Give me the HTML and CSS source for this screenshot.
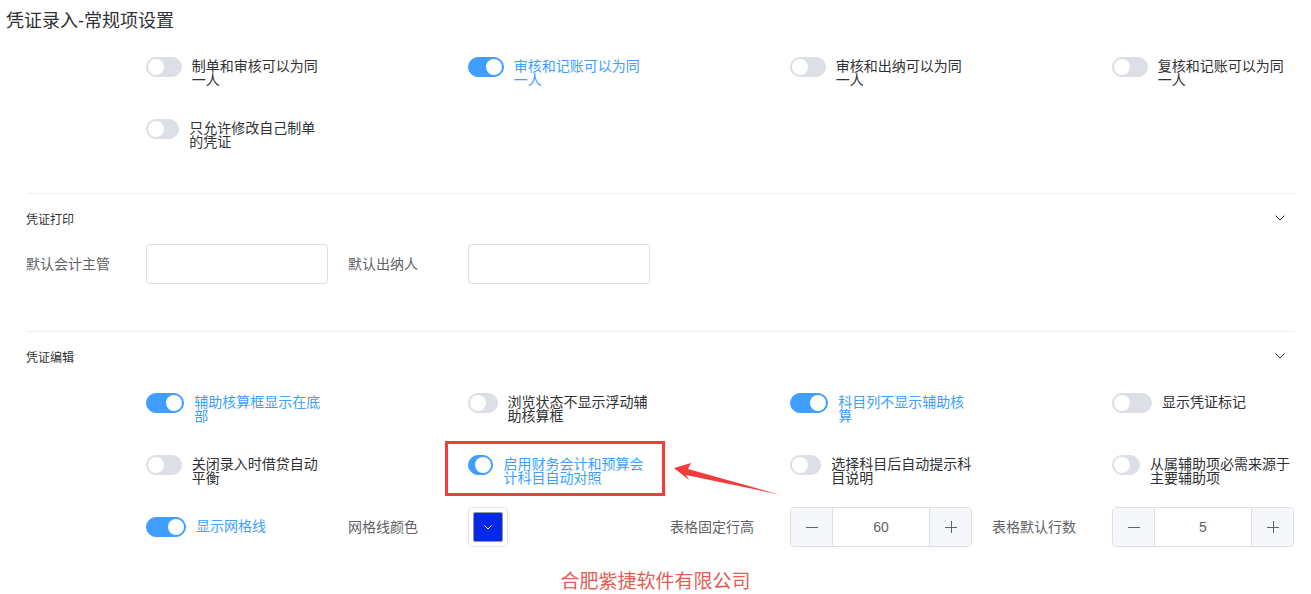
FILE: index.html
```html
<!doctype html>
<html>
  <head>
    <meta charset="utf-8">
    <title>凭证录入-常规项设置</title>
    <link rel="stylesheet" href="styles.css">
  </head>
  <body>
    <div class="page">
      <h1 class="title">凭证录入-常规项设置</h1>
      <div class="form">

        <!-- basic switches -->
        <div class="basic">
          <div class="row">
            <div class="cell"><div class="cell-label"></div><div class="cell-control">
              <label class="switch"><span class="switch-core"></span><span class="switch-label">制单和审核可以为同一人</span></label>
            </div></div>
            <div class="cell"><div class="cell-label"></div><div class="cell-control">
              <label class="switch on"><span class="switch-core"></span><span class="switch-label">审核和记账可以为同一人</span></label>
            </div></div>
            <div class="cell"><div class="cell-label"></div><div class="cell-control">
              <label class="switch"><span class="switch-core"></span><span class="switch-label">审核和出纳可以为同一人</span></label>
            </div></div>
            <div class="cell"><div class="cell-label"></div><div class="cell-control">
              <label class="switch"><span class="switch-core"></span><span class="switch-label">复核和记账可以为同一人</span></label>
            </div></div>
          </div>
          <div class="row">
            <div class="cell"><div class="cell-label"></div><div class="cell-control">
              <label class="switch"><span class="switch-core"></span><span class="switch-label">只允许修改自己制单的凭证</span></label>
            </div></div>
          </div>
        </div>

        <div class="collapse">
          <!-- print -->
          <div class="collapse-item">
            <div class="collapse-header">
              <span>凭证打印</span>
              <svg class="collapse-arrow" width="10" height="6" viewBox="0 0 10 6"><polyline points="0.5,0.5 5,5 9.5,0.5" fill="none" stroke="#303133" stroke-width="1"/></svg>
            </div>
            <div class="collapse-content">
              <div class="row">
                <div class="cell"><div class="cell-label">默认会计主管</div><div class="cell-control"><div class="input"></div></div></div>
                <div class="cell"><div class="cell-label">默认出纳人</div><div class="cell-control"><div class="input"></div></div></div>
              </div>
            </div>
          </div>

          <!-- edit -->
          <div class="collapse-item">
            <div class="collapse-header">
              <span>凭证编辑</span>
              <svg class="collapse-arrow" width="10" height="6" viewBox="0 0 10 6"><polyline points="0.5,0.5 5,5 9.5,0.5" fill="none" stroke="#303133" stroke-width="1"/></svg>
            </div>
            <div class="collapse-content">
              <div class="row">
                <div class="cell"><div class="cell-label"></div><div class="cell-control">
                  <label class="switch on"><span class="switch-core"></span><span class="switch-label">辅助核算框显示在底部</span></label>
                </div></div>
                <div class="cell"><div class="cell-label"></div><div class="cell-control">
                  <label class="switch"><span class="switch-core"></span><span class="switch-label">浏览状态不显示浮动辅助核算框</span></label>
                </div></div>
                <div class="cell"><div class="cell-label"></div><div class="cell-control">
                  <label class="switch on"><span class="switch-core"></span><span class="switch-label">科目列不显示辅助核算</span></label>
                </div></div>
                <div class="cell"><div class="cell-label"></div><div class="cell-control">
                  <label class="switch"><span class="switch-core"></span><span class="switch-label">显示凭证标记</span></label>
                </div></div>
              </div>
              <div class="row">
                <div class="cell"><div class="cell-label"></div><div class="cell-control">
                  <label class="switch"><span class="switch-core"></span><span class="switch-label">关闭录入时借贷自动平衡</span></label>
                </div></div>
                <div class="cell"><div class="cell-label"></div><div class="cell-control">
                  <label class="switch on"><span class="switch-core"></span><span class="switch-label">启用财务会计和预算会计科目自动对照</span></label>
                  <div class="mark"></div>
                  <svg class="arrow" width="112" height="40" viewBox="0 0 112 40"><polygon points="4,10 21,5 18,11 109,36.5 16,17 19,22" fill="#f23c3c"/></svg>
                </div></div>
                <div class="cell"><div class="cell-label"></div><div class="cell-control">
                  <label class="switch"><span class="switch-core"></span><span class="switch-label">选择科目后自动提示科目说明</span></label>
                </div></div>
                <div class="cell"><div class="cell-label"></div><div class="cell-control">
                  <label class="switch"><span class="switch-core"></span><span class="switch-label">从属辅助项必需来源于主要辅助项</span></label>
                </div></div>
              </div>
              <div class="row">
                <div class="cell"><div class="cell-label"></div><div class="cell-control">
                  <label class="switch on"><span class="switch-core"></span><span class="switch-label">显示网格线</span></label>
                </div></div>
                <div class="cell"><div class="cell-label">网格线颜色</div><div class="cell-control">
                  <div class="picker"><div class="picker-color">
                    <svg width="8" height="5" viewBox="0 0 8 5"><polyline points="0.5,0.5 4,4 7.5,0.5" fill="none" stroke="#fff" stroke-width="1"/></svg>
                  </div></div>
                </div></div>
                <div class="cell"><div class="cell-label">表格固定行高</div><div class="cell-control">
                  <div class="number">
                    <span class="number-btn minus"><svg width="12" height="12" viewBox="0 0 12 12"><line x1="0" y1="6.5" x2="12" y2="6.5" stroke="#606266"/></svg></span>
                    <span class="number-value">60</span>
                    <span class="number-btn plus"><svg width="12" height="12" viewBox="0 0 12 12"><line x1="0" y1="6.5" x2="12" y2="6.5" stroke="#606266"/><line x1="6.5" y1="0" x2="6.5" y2="12" stroke="#606266"/></svg></span>
                  </div>
                </div></div>
                <div class="cell"><div class="cell-label">表格默认行数</div><div class="cell-control">
                  <div class="number">
                    <span class="number-btn minus"><svg width="12" height="12" viewBox="0 0 12 12"><line x1="0" y1="6.5" x2="12" y2="6.5" stroke="#606266"/></svg></span>
                    <span class="number-value">5</span>
                    <span class="number-btn plus"><svg width="12" height="12" viewBox="0 0 12 12"><line x1="0" y1="6.5" x2="12" y2="6.5" stroke="#606266"/><line x1="6.5" y1="0" x2="6.5" y2="12" stroke="#606266"/></svg></span>
                  </div>
                </div></div>
              </div>
            </div>
          </div>
        </div>
      </div>
      <div class="watermark">合肥紫捷软件有限公司</div>
    </div>
  </body>
</html>
```

FILE: styles.css
```css
BODY {margin: 0; font-family: "Liberation Sans", "Noto Sans CJK SC", sans-serif; color: #303133; background: #fff;}

.page {position: relative; padding: 9px 16px 0 6px;}
.title {margin: 0; font-size: 18px; line-height: 24px; font-weight: normal;}
.form {margin-left: 20px;}
.basic {padding: 14px 0 22px;}

.row {display: grid; grid-template-columns: repeat(4, 302px); column-gap: 20px;}
.cell {display: flex; height: 40px; margin-bottom: 22px;}
.cell-label {flex: 0 0 120px; line-height: 40px; font-size: 14px; color: #606266;}
.cell-control {position: relative; flex: 0 0 182px; display: flex;}

/* switch */
.switch {display: flex; align-items: flex-start; width: 182px; padding-top: 10px; cursor: pointer;}
.switch-core {position: relative; flex: 0 1 40px; min-width: 0; height: 20px; box-sizing: border-box; border: 1px solid #dcdfe6; border-radius: 10px; background: #dcdfe6;}
.switch-core::after {content: ""; position: absolute; top: 1px; left: 1px; width: 16px; height: 16px; border-radius: 50%; background: #fff;}
.switch-label {flex: 0 1 auto; min-width: 0; margin: 2px 0 0 10px; font-size: 14px; line-height: 14px;}
.switch.on .switch-core {border-color: #409eff; background: #409eff;}
.switch.on .switch-core::after {left: auto; right: 1px;}
.switch.on .switch-label {color: #409eff;}

/* collapse */
.collapse {border-top: 1px solid #ebeef5;}
.collapse-item {border-bottom: 1px solid #ebeef5;}
.collapse-header {display: flex; align-items: center; justify-content: space-between; height: 48px; font-size: 12px;}
.collapse-arrow {margin-right: 10px;}
.collapse-content {padding: 2px 0 25px;}
.collapse-item:last-child .collapse-content {padding-top: 3px;}

/* inputs */
.input {width: 182px; height: 40px; box-sizing: border-box; border: 1px solid #dcdfe6; border-radius: 4px;}
.number {display: flex; width: 182px; height: 40px; box-sizing: border-box; border: 1px solid #dcdfe6; border-radius: 4px; overflow: hidden;}
.number-btn {flex: 0 0 41px; display: flex; align-items: center; justify-content: center; background: #f5f7fa;}
.number-btn.minus {border-right: 1px solid #dcdfe6;}
.number-btn.plus {border-left: 1px solid #dcdfe6;}
.number-value {flex: 1; text-align: center; line-height: 38px; font-size: 14px; color: #606266;}

.picker {width: 40px; height: 40px; box-sizing: border-box; padding: 4px; border: 1px solid #e6e6e6; border-radius: 4px;}
.picker-color {display: flex; align-items: center; justify-content: center; height: 100%; box-sizing: border-box; border: 1px solid #999; border-radius: 2px; background: #0429e6;}

/* annotation */
.mark {position: absolute; left: -23px; top: -4px; width: 220px; height: 55px; box-sizing: border-box; border: 3px solid #f23c3c;}
.arrow {position: absolute; left: 202px; top: 13px;}

.watermark {position: absolute; top: 569px; left: 0; right: 0; text-align: center; font-size: 19px; line-height: 26px; color: #e35d52;}
```
